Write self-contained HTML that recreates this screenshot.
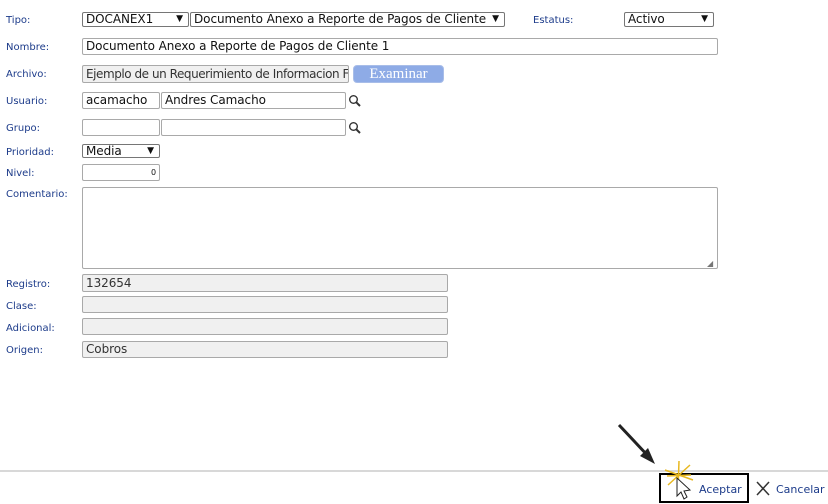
<!DOCTYPE html>
<html><head><meta charset="utf-8"><style>
body{margin:0;width:828px;height:504px;background:#fff;position:relative;overflow:hidden;font-family:"DejaVu Sans","Liberation Sans",sans-serif}
.l{position:absolute;left:6px;font-size:10px;color:#1c3b8a;line-height:12px}
.b{position:absolute;box-sizing:border-box;border:1px solid #a9a9a9;border-radius:2px;background:#fff;font-size:12px;line-height:15px;padding-left:3px;color:#111;white-space:nowrap;overflow:hidden;letter-spacing:-0.07px}
.g{background:#f0f0f0;color:#333}
.s{border-color:#767676}
.s:after{content:"▼";position:absolute;right:5px;top:0;font-size:9px;background:#fff;padding-left:2px}
</style></head><body>
<div class="l" style="top:15px">Tipo:</div>
<div class="b s" style="left:82px;top:12px;width:107px;height:15px;line-height:13px">DOCANEX1</div>
<div class="b s" style="left:190px;top:12px;width:315px;height:15px;line-height:13px">Documento Anexo a Reporte de Pagos de Cliente 1</div>
<div class="l" style="left:533px;top:15px">Estatus:</div>
<div class="b s" style="left:624px;top:12px;width:90px;height:15px;line-height:13px">Activo</div>
<div class="l" style="top:42px">Nombre:</div>
<div class="b" style="left:82px;top:38px;width:636px;height:17px">Documento Anexo a Reporte de Pagos de Cliente 1</div>
<div class="l" style="top:69px">Archivo:</div>
<div class="b g" style="left:82px;top:65px;width:267px;height:18px;line-height:16px;letter-spacing:-0.45px">Ejemplo de un Requerimiento de Informacion Fu</div>
<div style="position:absolute;left:353px;top:65px;width:91px;height:18px;background:#8eabe6;border:1px solid #a8bde8;box-sizing:border-box;border-radius:4px;color:#fff;font-family:'Liberation Serif',serif;font-size:15px;text-align:center;line-height:16px">Examinar</div>
<div class="l" style="top:96px">Usuario:</div>
<div class="b" style="left:82px;top:92px;width:78px;height:17px">acamacho</div>
<div class="b" style="left:161px;top:92px;width:185px;height:17px">Andres Camacho</div>
<svg style="position:absolute;left:348px;top:94px" width="14" height="14"><circle cx="5.5" cy="5.5" r="3.8" fill="none" stroke="#333" stroke-width="1.4"/><line x1="8.3" y1="8.3" x2="12" y2="12" stroke="#333" stroke-width="2"/></svg>
<div class="l" style="top:123px">Grupo:</div>
<div class="b" style="left:82px;top:119px;width:78px;height:17px"></div>
<div class="b" style="left:161px;top:119px;width:185px;height:17px"></div>
<svg style="position:absolute;left:348px;top:121px" width="14" height="14"><circle cx="5.5" cy="5.5" r="3.8" fill="none" stroke="#333" stroke-width="1.4"/><line x1="8.3" y1="8.3" x2="12" y2="12" stroke="#333" stroke-width="2"/></svg>
<div class="l" style="top:147px">Prioridad:</div>
<div class="b s" style="left:82px;top:144px;width:78px;height:14px;line-height:12px">Media</div>
<div class="l" style="top:168px">Nivel:</div>
<div class="b" style="left:82px;top:164px;width:78px;height:17px;font-size:8px;text-align:right;padding-right:3px">0</div>
<div class="l" style="top:189px">Comentario:</div>
<div class="b" style="left:82px;top:187px;width:636px;height:82px"></div>
<div style="position:absolute;left:707px;top:259px;font-size:8px;color:#777">◢</div>
<div class="l" style="top:279px">Registro:</div>
<div class="b g" style="left:82px;top:274px;width:366px;height:18px;line-height:16px">132654</div>
<div class="l" style="top:301px">Clase:</div>
<div class="b g" style="left:82px;top:296px;width:366px;height:17px"></div>
<div class="l" style="top:323px">Adicional:</div>
<div class="b g" style="left:82px;top:318px;width:366px;height:17px"></div>
<div class="l" style="top:345px">Origen:</div>
<div class="b g" style="left:82px;top:341px;width:366px;height:17px;line-height:15px">Cobros</div>
<div style="position:absolute;left:0;top:470px;width:828px;height:2px;background:#d8d8d8"></div>
<svg style="position:absolute;left:0;top:0" width="828" height="504">
<line x1="619" y1="425" x2="650" y2="458" stroke="#222" stroke-width="3"/>
<polygon points="655,464 640,456 648,448" fill="#222"/>
<rect x="660" y="474" width="88" height="28" fill="none" stroke="#000" stroke-width="2"/>
<g stroke="#e8b820" stroke-width="1.5"><line x1="665" y1="470" x2="693" y2="480"/><line x1="668" y1="485" x2="690" y2="465"/><line x1="679" y1="461" x2="678" y2="490"/><line x1="667" y1="476" x2="691" y2="475"/></g>
<path d="M677,478 L677,496 L681,492 L684,499 L687,497 L684,491 L690,490 Z" fill="#fff" stroke="#222" stroke-width="1"/>
<line x1="757" y1="482" x2="769" y2="495" stroke="#333" stroke-width="1.5"/><line x1="769" y1="482" x2="757" y2="495" stroke="#333" stroke-width="1.5"/>
</svg>
<div style="position:absolute;left:699px;top:483px;font-size:11px;color:#1c3b8a">Aceptar</div>
<div style="position:absolute;left:776px;top:483px;font-size:11px;color:#1c3b8a">Cancelar</div>
</body></html>
